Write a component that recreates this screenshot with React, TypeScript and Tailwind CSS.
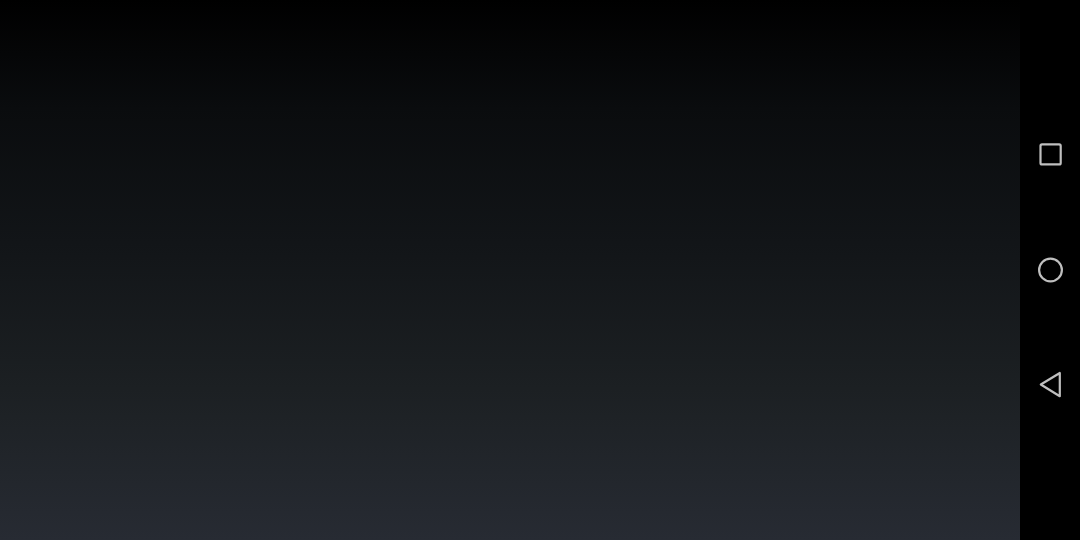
export default function App() {
  return (
    <div className="flex h-[540px] w-[1080px] overflow-hidden bg-black">
      {/* Wallpaper */}
      <div className="h-full flex-1 bg-[linear-gradient(to_bottom,#000000_0%,#0a0c0e_20%,#121518_45%,#1c2023_72%,#272b33_100%)]" />

      {/* Navigation bar */}
      <div className="flex h-full w-[60px] flex-col items-center justify-center bg-black text-[#bfbfbf]">
        <div className="flex h-[115px] w-full items-center justify-center">
          <svg width="32" height="32" viewBox="0 0 32 32" fill="none" stroke="currentColor" strokeWidth="2.2">
            <rect x="6.5" y="5.4" width="20.2" height="20" rx="1.5" />
          </svg>
        </div>
        <div className="flex h-[115px] w-full items-center justify-center">
          <svg width="32" height="32" viewBox="0 0 32 32" fill="none" stroke="currentColor" strokeWidth="2.2">
            <circle cx="16.5" cy="16" r="11.4" />
          </svg>
        </div>
        <div className="flex h-[115px] w-full items-center justify-center">
          <svg width="32" height="32" viewBox="0 0 32 32" fill="none" stroke="currentColor" strokeWidth="2.2" strokeLinejoin="round">
            <path d="M25.8 4V27.2L6.8 15.5Z" />
          </svg>
        </div>
      </div>
    </div>
  );
}
